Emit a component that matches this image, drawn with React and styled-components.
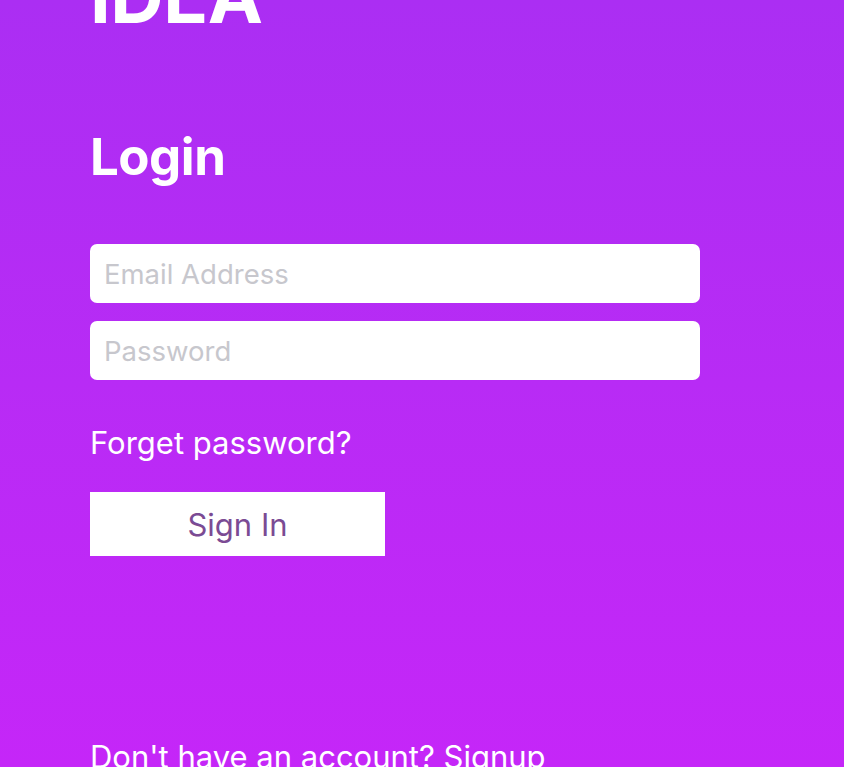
import React from "react";
import styled, { createGlobalStyle } from "styled-components";

const Global = createGlobalStyle`
  html, body { margin: 0; padding: 0; height: 100%; overflow: hidden; }
  body { font-family: Inter, "Noto Sans", sans-serif; }
  #root { height: 100%; }
`;

const Page = styled.div`
  width: 844px;
  height: 767px;
  overflow: hidden;
  background: linear-gradient(180deg, #ab2ef3 0%, #b82bf5 50%, #c526f8 100%);
  display: flex;
  flex-direction: column;
  padding: 0 0 0 90px;
  box-sizing: border-box;
`;

const Logo = styled.h1`
  flex-shrink: 0;
  margin: -42px 0 0 0;
  font-size: 74px;
  font-weight: 700;
  line-height: 76px;
  color: #ffffff;
  letter-spacing: -0.5px;
`;

const Title = styled.h2`
  flex-shrink: 0;
  margin: 92px 0 0 0;
  font-size: 51px;
  font-weight: 700;
  line-height: 62px;
  color: #ffffff;
  letter-spacing: -0.5px;
`;

const Form = styled.form`
  flex-shrink: 0;
  display: flex;
  flex-direction: column;
  gap: 18px;
  margin-top: 56px;
  width: 610px;
`;

const Input = styled.input`
  height: 59px;
  box-sizing: border-box;
  border: none;
  border-radius: 7px;
  background: #ffffff;
  padding: 0 14px;
  font-family: Inter, "Noto Sans", sans-serif;
  font-size: 27.5px;
  color: #333;
  outline: none;
  &::placeholder { color: #c7c7cd; }
`;

const Link = styled.a`
  flex-shrink: 0;
  display: block;
  color: #ffffff;
  font-size: 31px;
  line-height: 36px;
  text-decoration: none;
  margin-top: ${(p) => p.$top}px;
`;

const Button = styled.button`
  flex-shrink: 0;
  margin-top: 31px;
  width: 295px;
  height: 64px;
  border: none;
  border-radius: 0;
  background: #ffffff;
  color: #7b4b94;
  font-family: Inter, "Noto Sans", sans-serif;
  font-size: 31px;
  cursor: pointer;
  padding: 0;
`;

export default function App() {
  return (
    <>
      <Global />
      <Page>
        <Logo>IDEA</Logo>
        <Title>Login</Title>
        <Form onSubmit={(e) => e.preventDefault()}>
          <Input type="email" placeholder="Email Address" />
          <Input type="password" placeholder="Password" />
        </Form>
        <Link $top={45}>Forget password?</Link>
        <Button type="button">Sign In</Button>
        <Link $top={183}>Don't have an account? Signup</Link>
      </Page>
    </>
  );
}
